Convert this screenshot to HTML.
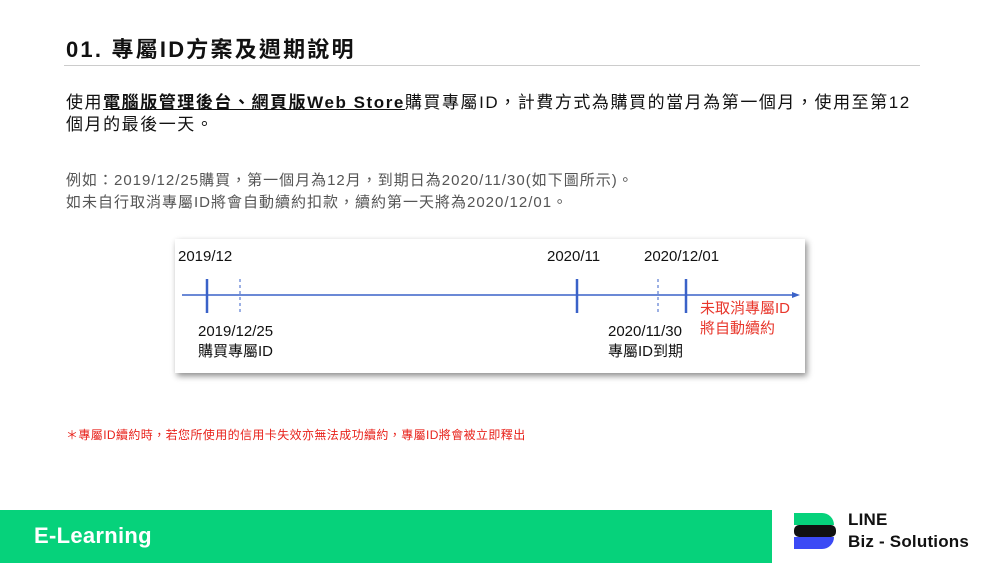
<!DOCTYPE html>
<html><head><meta charset="utf-8"><style>
*{margin:0;padding:0;box-sizing:border-box}
body{width:1000px;height:563px;position:relative;background:#fff;font-family:"Liberation Sans","Noto Sans CJK TC",sans-serif;color:#111;overflow:hidden}
.a{position:absolute;white-space:nowrap}
</style></head><body>
<div class="a" style="left:66px;top:32px;font-size:22px;font-weight:bold;letter-spacing:2.2px">01. 專屬ID方案及週期說明</div>
<div class="a" style="left:64px;top:65px;width:856px;height:1px;background:#ccc"></div>
<div class="a" style="left:66px;top:92px;font-size:17px;line-height:22px;letter-spacing:1.55px">使用<b style="text-decoration:underline">電腦版管理後台、網頁版Web Store</b>購買專屬ID，計費方式為購買的當月為第一個月，使用至第12<br>個月的最後一天。</div>
<div class="a" style="left:66px;top:170px;font-size:15px;line-height:22px;color:#555;letter-spacing:1.0px">例如：2019/12/25購買，第一個月為12月，到期日為2020/11/30(如下圖所示)。<br>如未自行取消專屬ID將會自動續約扣款，續約第一天將為2020/12/01。</div>
<div class="a" style="left:175px;top:239px;width:630px;height:134px;background:#fff;box-shadow:2px 3px 6px rgba(0,0,0,.45)"></div>
<svg class="a" style="left:170px;top:235px" width="640" height="145">
<line x1="12" y1="60" x2="625" y2="60" stroke="#3a62c8" stroke-width="1.5"/>
<polygon points="630,60 622,57 622,63" fill="#3a62c8"/>
<g stroke="#3a62c8" stroke-width="2.5"><line x1="37" y1="44" x2="37" y2="78"/><line x1="407" y1="44" x2="407" y2="78"/><line x1="516" y1="44" x2="516" y2="78"/></g>
<g stroke="#3a62c8" stroke-width="1" stroke-dasharray="3,3"><line x1="70" y1="44" x2="70" y2="78"/><line x1="488" y1="44" x2="488" y2="78"/></g>
</svg>
<div class="a" style="left:178px;top:248px;font-size:15px">2019/12</div>
<div class="a" style="left:547px;top:248px;font-size:15px">2020/11</div>
<div class="a" style="left:644px;top:248px;font-size:15px">2020/12/01</div>
<div class="a" style="left:198px;top:322px;font-size:15px;line-height:20px">2019/12/25<br>購買專屬ID</div>
<div class="a" style="left:608px;top:322px;font-size:15px;line-height:20px">2020/11/30<br>專屬ID到期</div>
<div class="a" style="left:700px;top:299px;font-size:15px;line-height:20px;color:#e8372c">未取消專屬ID<br>將自動續約</div>
<div class="a" style="left:66px;top:426px;font-size:12px;color:#e8231c;letter-spacing:.4px">＊專屬ID續約時，若您所使用的信用卡失效亦無法成功續約，專屬ID將會被立即釋出</div>
<div class="a" style="left:0;top:510px;width:772px;height:53px;background:#06d27b"></div>
<div class="a" style="left:34px;top:523px;font-size:22px;font-weight:bold;color:#fff;letter-spacing:.3px">E-Learning</div>
<svg class="a" style="left:794px;top:513px" width="44" height="36">
<path d="M0 0H28A12 12 0 0 1 40 12H0Z" fill="#06d27b"/>
<rect x="0" y="12" width="42" height="12" rx="5" fill="#111"/>
<path d="M0 24H40A12 12 0 0 1 28 36H0Z" fill="#3b4af5"/>
</svg>
<div class="a" style="left:848px;top:509px;font-size:17px;font-weight:bold;line-height:22px;color:#111;letter-spacing:.2px">LINE<br>Biz - Solutions</div>
</body></html>
